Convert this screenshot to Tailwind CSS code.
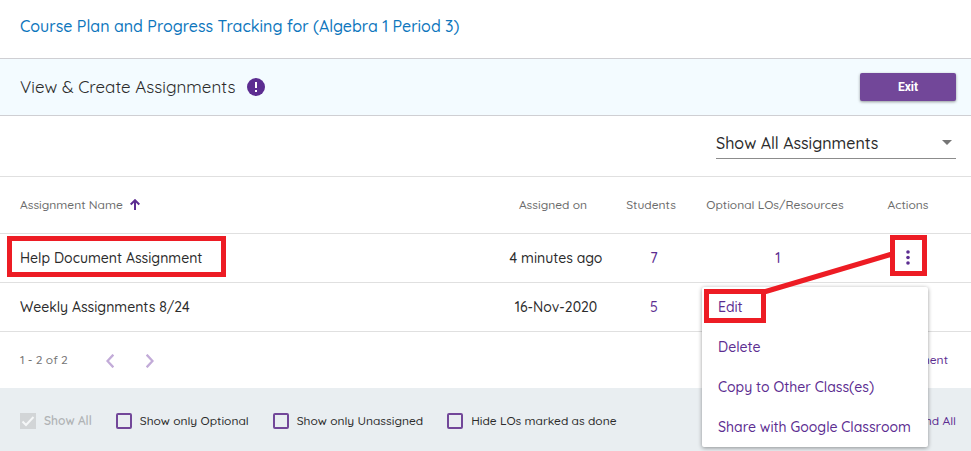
<!DOCTYPE html>
<html lang="en">
  <head>
    <meta charset="UTF-8" />
    <meta name="viewport" content="width=device-width, initial-scale=1" />
    <title>View &amp; Create Assignments</title>
    <script src="https://cdn.jsdelivr.net/npm/@tailwindcss/browser@4"></script>
  </head>
  <body class="relative bg-white text-[#2b2b2b] font-[Quicksand,Lato,sans-serif] font-medium">
    <header class="px-5 pt-3 pb-[18px] border-b border-[#cfcfd3]">
      <h1 class="text-base leading-7 text-[#0d76bd]">Course Plan and Progress Tracking for (Algebra 1 Period 3)</h1>
    </header>

    <section class="flex items-center justify-between pl-5 pr-[15px] py-[14px] bg-[#f3fbff] border-b border-[#cfcfd3]">
      <div class="flex items-center gap-3">
        <h2 class="text-[17px] leading-7 font-normal">View &amp; Create Assignments</h2>
        <svg class="size-[18px]" viewBox="0 0 18 18" aria-hidden="true">
          <circle cx="9" cy="9" r="9" fill="#5c2d91" />
          <path d="M9 4v6M9 12v2" stroke="#fff" stroke-width="2" />
        </svg>
      </div>
      <button type="button" class="w-24 h-7 rounded-xs bg-[#724799] text-white text-xs font-bold font-[Roboto,sans-serif] shadow-[0_1px_3px_rgba(0,0,0,0.4)]">Exit</button>
    </section>

    <div class="flex justify-end pr-[15px] pt-[10px] pb-[17px] border-b border-[#e0e0e0]">
      <div class="relative w-60">
        <select aria-label="Filter assignments" class="w-full h-[33px] pt-0.5 appearance-none border-b border-[#8c8c8c] text-base bg-transparent">
          <option>Show All Assignments</option>
        </select>
        <svg class="absolute right-1 top-[14px] w-[10px] h-[5px] pointer-events-none" viewBox="0 0 10 5" aria-hidden="true">
          <path d="M0 0h10L5 5z" fill="#757575" />
        </svg>
      </div>
    </div>

    <table class="w-full table-fixed text-sm">
      <colgroup>
        <col />
        <col class="w-[116px]" />
        <col class="w-20" />
        <col class="w-[168px]" />
        <col class="w-[109px]" />
      </colgroup>
      <thead class="text-xs text-[#6b6b6b]">
        <tr class="h-14 border-b border-[#e0e0e0]">
          <th class="pl-5 text-left font-medium">
            <button type="button" class="flex items-center gap-[7px]">
              Assignment Name
              <svg class="w-[10px] h-[11px]" viewBox="0 0 10 11" fill="none" stroke="#5c2d91" stroke-width="2" aria-hidden="true">
                <path d="M5 11V1.5M.7 5.5L5 1.2l4.300 4.300" />
              </svg>
            </button>
          </th>
          <th class="pr-1.5 font-medium">Assigned on</th>
          <th class="pr-1.5 font-medium">Students</th>
          <th class="pr-1.5 font-medium">Optional LOs/Resources</th>
          <th class="pr-[17px] font-medium">Actions</th>
        </tr>
      </thead>
      <tbody class="text-center">
        <tr class="h-[49px] border-b border-[#e0e0e0]">
          <td class="pl-5 text-left">Help Document Assignment</td>
          <td>4 minutes ago</td>
          <td><a href="#" class="text-[#5c2d91]">7</a></td>
          <td><a href="#" class="text-[#5c2d91]">1</a></td>
          <td class="pr-[17px]">
            <button type="button" aria-label="Actions for Help Document Assignment" class="block mx-auto">
              <svg class="w-1 h-4" viewBox="0 0 4 16" fill="#5c2d91" aria-hidden="true">
                <circle cx="2" cy="2" r="1.800" />
                <circle cx="2" cy="7.500" r="1.800" />
                <circle cx="2" cy="13" r="1.800" />
              </svg>
            </button>
          </td>
        </tr>
        <tr class="h-[49px] border-b border-[#e0e0e0]">
          <td class="pl-5 text-left">Weekly Assignments 8/24</td>
          <td>16-Nov-2020</td>
          <td><a href="#" class="text-[#5c2d91]">5</a></td>
          <td></td>
          <td></td>
        </tr>
      </tbody>
    </table>

    <div class="flex items-center justify-between h-14 pl-5 pr-[23px] text-xs">
      <div class="flex items-center text-[#757575]">
        <span>1 - 2 of 2</span>
        <div class="flex gap-8 pt-0.5 ml-[38px]">
          <button type="button" disabled aria-label="Previous page">
            <svg class="w-2 h-[14px]" viewBox="0 0 8 14" fill="none" stroke="#c2abd8" stroke-width="2.300" aria-hidden="true">
              <path d="M7.300 .7L1.500 7l5.800 6.300" />
            </svg>
          </button>
          <button type="button" disabled aria-label="Next page">
            <svg class="w-2 h-[14px]" viewBox="0 0 8 14" fill="none" stroke="#c2abd8" stroke-width="2.300" aria-hidden="true">
              <path d="M.7 .7L6.500 7 .7 13.300" />
            </svg>
          </button>
        </div>
      </div>
      <a href="#" class="text-[#5c2d91]">Create Assignment</a>
    </div>

    <footer class="flex items-center justify-between h-[63px] pt-1 pl-5 pr-[15px] bg-[#e9eef1] text-xs">
      <div class="flex items-center gap-6">
        <label class="relative flex items-center gap-2 font-semibold text-[#b0b3b5]">
          <input type="checkbox" checked disabled class="size-4 appearance-none bg-[#d2d5d7]" />
          <svg class="absolute left-0 size-4" viewBox="0 0 16 16" fill="none" stroke="#f5f7f8" stroke-width="2" aria-hidden="true">
            <path d="M2.500 8.500l3.500 3.500 7.500-8" />
          </svg>
          Show All
        </label>
        <label class="flex items-center gap-2">
          <input type="checkbox" class="size-4 appearance-none border-2 border-[#724799] rounded-xs" />
          Show only Optional
        </label>
        <label class="flex items-center gap-2">
          <input type="checkbox" class="size-4 appearance-none border-2 border-[#724799] rounded-xs" />
          Show only Unassigned
        </label>
        <label class="flex items-center gap-2">
          <input type="checkbox" class="size-4 appearance-none border-2 border-[#724799] rounded-xs" />
          Hide LOs marked as done
        </label>
      </div>
      <a href="#" class="text-[#5c2d91]">Expand All</a>
    </footer>

    <!-- actions menu -->
    <div role="menu" class="absolute right-[43px] top-[287px] w-[226px] flex flex-col rounded-xs bg-white text-sm text-[#5c2d91] shadow-[0_1px_4px_rgba(0,0,0,0.4)]">
      <button type="button" role="menuitem" class="h-10 px-4 text-left">Edit</button>
      <button type="button" role="menuitem" class="h-10 px-4 text-left">Delete</button>
      <button type="button" role="menuitem" class="h-10 px-4 text-left">Copy to Other Class(es)</button>
      <button type="button" role="menuitem" class="h-10 px-4 text-left whitespace-nowrap">Share with Google Classroom</button>
    </div>

    <!-- red callouts -->
    <div class="absolute left-[7px] top-[236px] w-[219px] h-[41px] border-5 border-[#ed1c24] pointer-events-none"></div>
    <svg class="absolute right-[43px] top-[235px] w-[225px] h-[89px] pointer-events-none" viewBox="0 0 225 89" fill="none" stroke="#ed1c24" stroke-width="5" aria-hidden="true">
      <path d="M189.500 2.500h32v36h-32zM3.500 56.500h57v29h-57zM61 57L189 19" />
    </svg>
  </body>
</html>
